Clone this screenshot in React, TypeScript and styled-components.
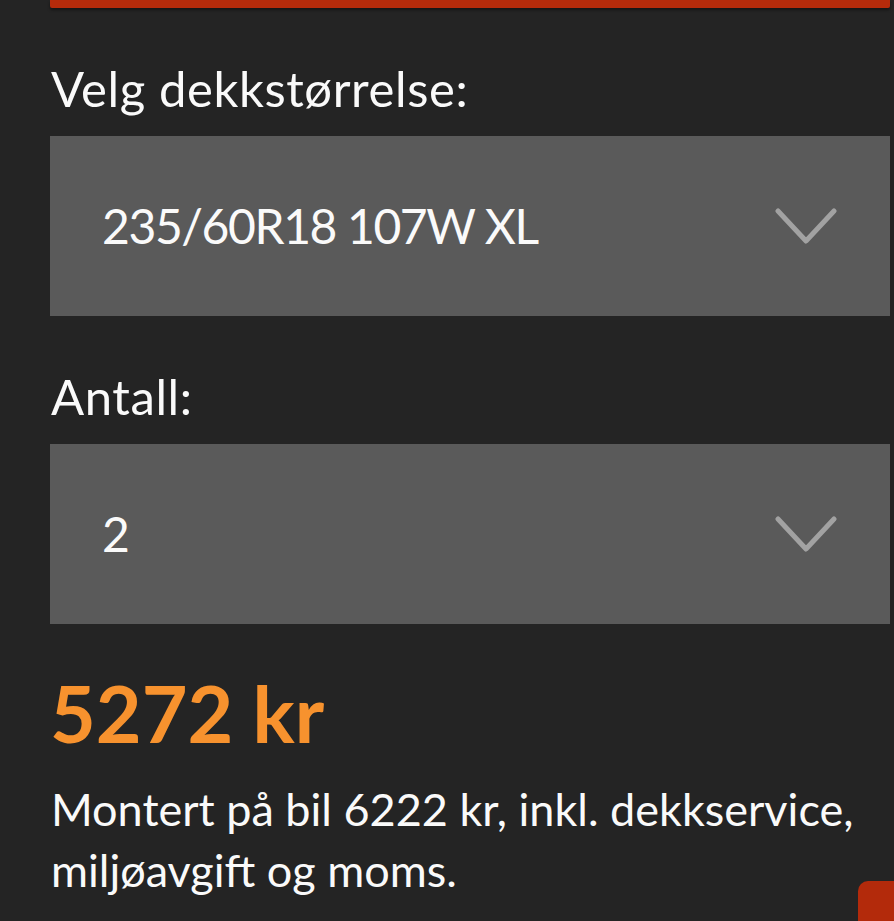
import React from 'react';
import styled, { createGlobalStyle } from 'styled-components';

const GlobalStyle = createGlobalStyle`
  html, body {
    margin: 0;
    padding: 0;
    background: #242424;
  }
  body {
    font-family: Lato, "Noto Sans", sans-serif;
    color: #fafafa;
  }
`;

const Page = styled.div`
  position: relative;
  min-height: 921px;
  padding: 0 4px 0 50px;
  overflow: hidden;
`;

const TopBar = styled.div`
  height: 8px;
  background: #b52b0b;
  border-radius: 0 0 2px 2px;
  box-shadow: 0 2px 3px rgba(0, 0, 0, 0.45);
`;

const Label = styled.div`
  margin: 50px 0 18px 1px;
  font-size: 49px;
  letter-spacing: 0.6px;
  line-height: 60px;
`;

const Select = styled.div`
  height: 180px;
  background: #5a5a5a;
  display: flex;
  align-items: center;
  justify-content: space-between;
  padding: 0 53px 0 52px;
  box-sizing: border-box;
`;

const SelectValue = styled.span`
  font-size: 48px;
  letter-spacing: -1.4px;
  line-height: 1;
`;

const Chevron = () => (
  <svg width="62" height="40" viewBox="0 0 62 40">
    <polyline
      points="3,5 31,35 59,5"
      fill="none"
      stroke="#a2a2a2"
      strokeWidth="5"
      strokeLinecap="round"
      strokeLinejoin="round"
    />
  </svg>
);

const Price = styled.div`
  margin: 43px 0 0 0;
  font-size: 79px;
  font-weight: 700;
  line-height: 91px;
  color: #f7922e;
`;

const Description = styled.p`
  margin: 21px 0 0 1px;
  font-size: 45px;
  line-height: 61px;
`;

const FloatingButton = styled.div`
  position: absolute;
  left: 858px;
  top: 881px;
  width: 60px;
  height: 60px;
  border-radius: 10px;
  background: #b32a0b;
`;

const App = () => {
  return (
    <>
      <GlobalStyle />
      <Page>
        <TopBar />
        <Label>Velg dekkstørrelse:</Label>
        <Select>
          <SelectValue>235/60R18 107W XL</SelectValue>
          <Chevron />
        </Select>
        <Label>Antall:</Label>
        <Select>
          <SelectValue>2</SelectValue>
          <Chevron />
        </Select>
        <Price>5272 kr</Price>
        <Description>
          Montert på bil 6222 kr, inkl. dekkservice,
          <br />
          miljøavgift og moms.
        </Description>
        <FloatingButton />
      </Page>
    </>
  );
};

export default App;
